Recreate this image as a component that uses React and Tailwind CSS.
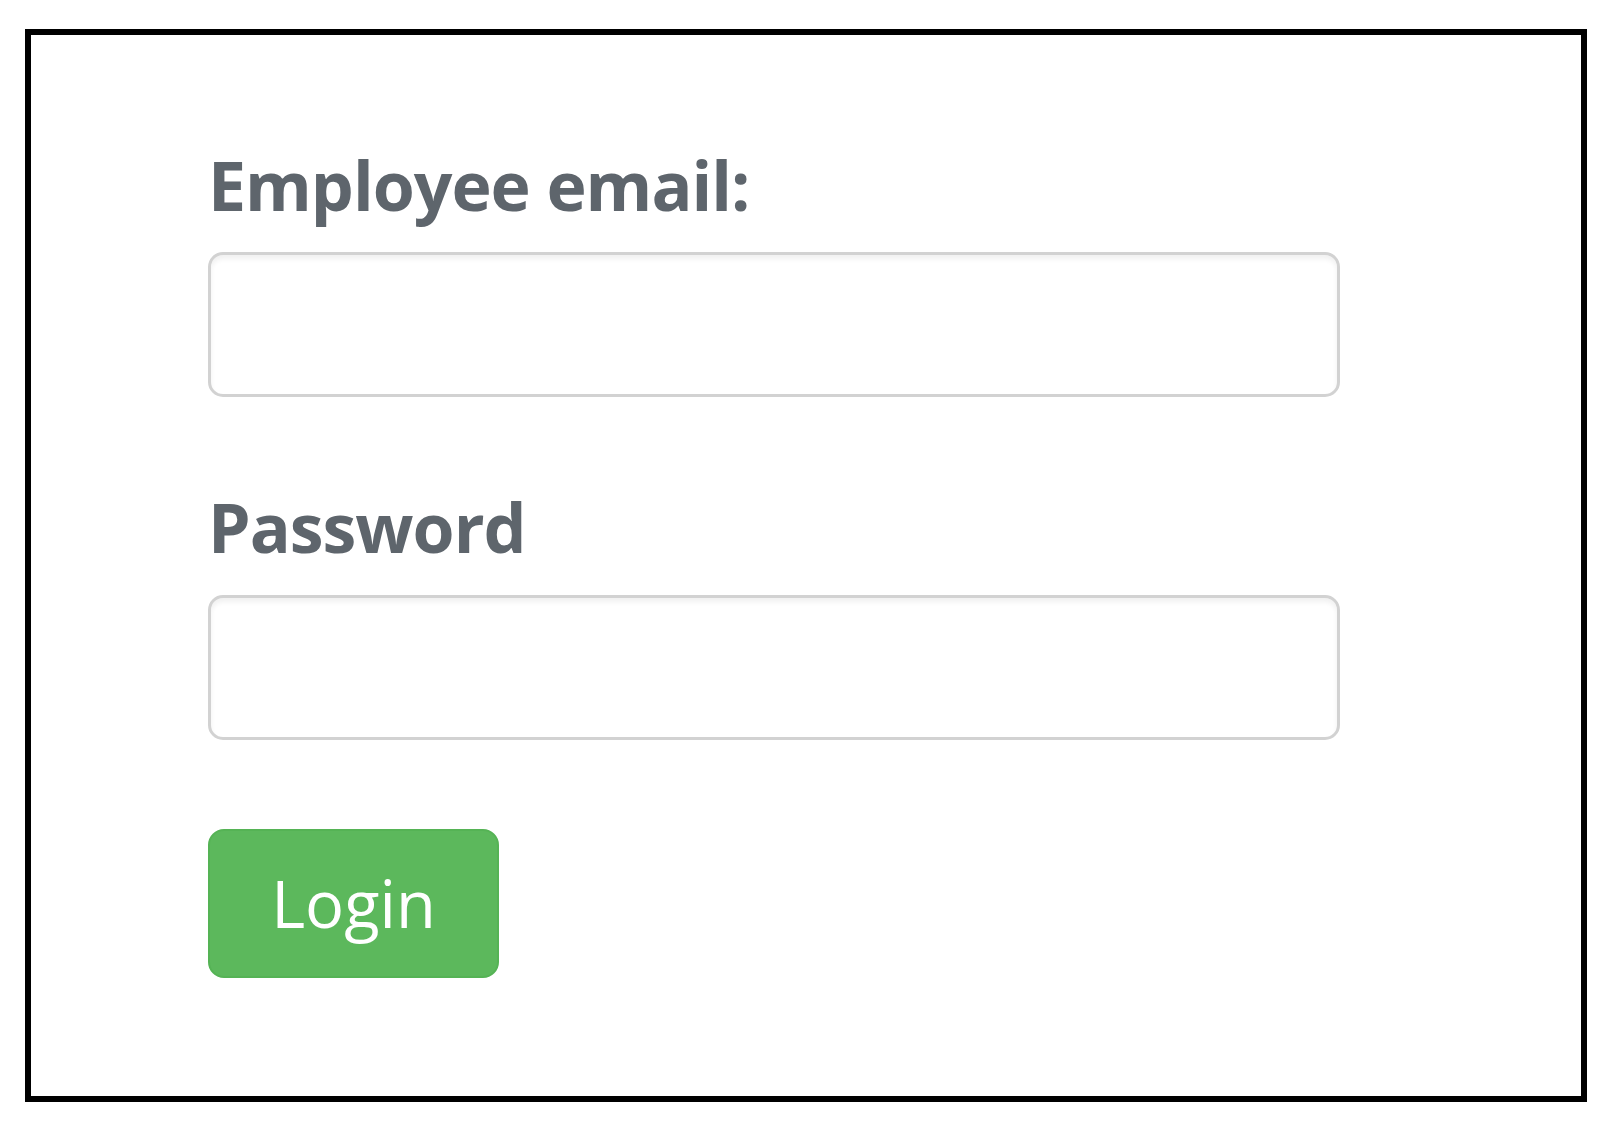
export default function App() {
  return (
    <div className="w-[1615px] h-[1135px] bg-white pt-[29px] pl-[25px]" style={{ fontFamily: '"Open Sans", sans-serif' }}>
      <div className="w-[1562px] h-[1073px] border-[6px] border-black pl-[177px] pt-[110px]">
        <form className="flex flex-col" onSubmit={(e) => e.preventDefault()}>
          <label className="text-[68px] leading-[80px] font-bold tracking-[-1px] text-[#5e656c]">Employee email:</label>
          <input
            type="email"
            className="mt-[27px] w-[1132px] h-[145px] rounded-[15px] border-[3px] border-[#d2d2d2] bg-white shadow-[inset_0_4px_5px_rgba(0,0,0,0.06)] outline-none"
          />
          <label className="mt-[90px] text-[68px] leading-[80px] font-bold tracking-[-1px] text-[#5e656c]">Password</label>
          <input
            type="password"
            className="mt-[28px] w-[1132px] h-[145px] rounded-[15px] border-[3px] border-[#d2d2d2] bg-white shadow-[inset_0_4px_5px_rgba(0,0,0,0.06)] outline-none"
          />
          <div className="mt-[89px]">
            <button
              type="submit"
              className="w-[291px] h-[149px] rounded-[16px] border-2 border-[#55b355] bg-[#5cb85c] text-white text-[65px] leading-none flex items-center justify-center"
            >
              Login
            </button>
          </div>
        </form>
      </div>
    </div>
  );
}
